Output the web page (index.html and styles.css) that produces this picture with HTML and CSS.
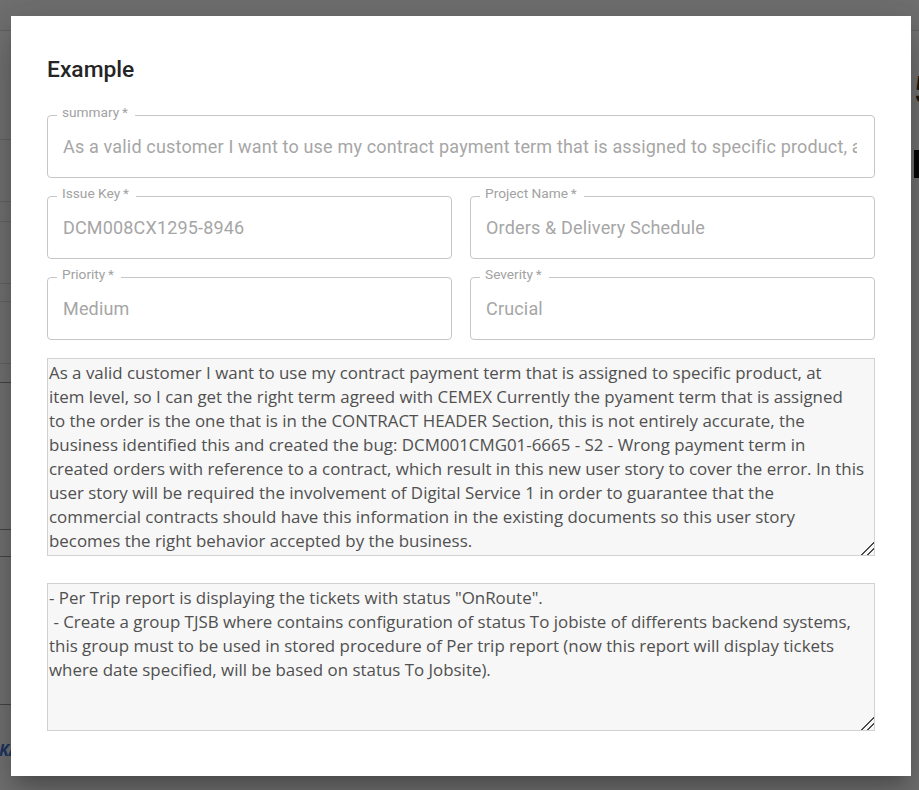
FILE: index.html
```html
<!DOCTYPE html>
<html lang="en">
<head>
<meta charset="utf-8">
<title>Example</title>
<link rel="stylesheet" href="styles.css">
</head>
<body>
<div class="page">
  <header class="page-header"></header>
  <div class="page-main">
    <div class="page-table">
      <div class="row r1"></div>
      <div class="row r2"></div>
      <div class="row r3"></div>
      <div class="row r4"></div>
      <div class="row r5"></div>
      <div class="row r6"></div>
      <div class="row r7 dark"></div>
      <div class="row r8 dark"></div>
      <div class="row r9 dark"></div>
      <div class="row r10 dark"></div>
      <div class="page-link">KANBAN</div>
    </div>
    <div class="page-side">
      <div class="side-num">5</div>
      <div class="side-title">r</div>
    </div>
  </div>
</div>
<div class="scrim"></div>
<div class="dialog-layer">
  <div class="dialog" role="dialog" aria-labelledby="dlg-title">
    <h2 class="dialog-title" id="dlg-title">Example</h2>
    <div class="fields">
      <fieldset class="field wide">
        <legend>summary&thinsp;*</legend>
        <input class="field-input" type="text" disabled value="As a valid customer I want to use my contract payment term that is assigned to specific product, at item level, so I can get the right term agreed with CEMEX">
      </fieldset>
      <fieldset class="field">
        <legend>Issue Key&thinsp;*</legend>
        <input class="field-input" type="text" disabled value="DCM008CX1295-8946">
      </fieldset>
      <fieldset class="field">
        <legend>Project Name&thinsp;*</legend>
        <input class="field-input" type="text" disabled value="Orders &amp; Delivery Schedule">
      </fieldset>
      <fieldset class="field">
        <legend>Priority&thinsp;*</legend>
        <input class="field-input" type="text" disabled value="Medium">
      </fieldset>
      <fieldset class="field">
        <legend>Severity&thinsp;*</legend>
        <input class="field-input" type="text" disabled value="Crucial">
      </fieldset>
    </div>
    <textarea class="area area-desc" readonly>As a valid customer I want to use my contract payment term that is assigned to specific product, at
item level, so I can get the right term agreed with CEMEX Currently the pyament term that is assigned
to the order is the one that is in the CONTRACT HEADER Section, this is not entirely accurate, the
business identified this and created the bug: DCM001CMG01-6665 - S2 - Wrong payment term in
created orders with reference to a contract, which result in this new user story to cover the error. In this
user story will be required the involvement of Digital Service 1 in order to guarantee that the
commercial contracts should have this information in the existing documents so this user story
becomes the right behavior accepted by the business.</textarea>
    <textarea class="area area-notes" readonly>- Per Trip report is displaying the tickets with status "OnRoute".
 - Create a group TJSB where contains configuration of status To jobiste of differents backend systems,
this group must to be used in stored procedure of Per trip report (now this report will display tickets
where date specified, will be based on status To Jobsite).</textarea>
  </div>
</div>
</body>
</html>
```

FILE: styles.css
```css
html, body {
  margin: 0;
  padding: 0;
  width: 919px;
  height: 790px;
  overflow: hidden;
  font-family: Roboto, "Liberation Sans", sans-serif;
}

/* background page (under the scrim) */
.page {
  position: fixed;
  inset: 0;
  background: #e6e6e6;
  display: flex;
  flex-direction: column;
}
.page-header {
  height: 30px;
  background: #e0e0e0;
  border-bottom: 1px solid #c6c6c6;
  flex: none;
}
.page-main {
  flex: 1;
  display: flex;
}
.page-table {
  width: 120px;
  display: flex;
  flex-direction: column;
}
.row {
  border-bottom: 1px solid #cbcbcb;
  flex: none;
}
.row.dark { border-bottom-color: #8c8c8c; }
.r1 { height: 108px; }
.r2 { height: 61px; }
.r3 { height: 19px; }
.r4 { height: 61px; }
.r5 { height: 17px; }
.r6 { height: 61px; }
.r7 { height: 18px; }
.r8 { height: 146px; }
.r9 { height: 26px; }
.r10 { height: 147px; }
.page-link {
  margin-top: 36px;
  margin-left: -1px;
  font-family: "Open Sans", sans-serif;
  font-weight: 700;
  font-style: italic;
  font-size: 16px;
  line-height: 18px;
  color: #3c6ec8;
  white-space: nowrap;
}
.page-side {
  margin-left: auto;
  width: 8px;
  overflow: visible;
  white-space: nowrap;
}
.side-num {
  margin-top: 40px;
  margin-left: 3px;
  font-size: 38px;
  line-height: 40px;
  font-weight: 700;
  color: #3a2a14;
}
.side-title {
  margin-top: 19px;
  font-size: 54px;
  line-height: 60px;
  font-weight: 700;
  color: #111;
}

.scrim {
  position: fixed;
  inset: 0;
  background: rgba(0, 0, 0, 0.5);
}

.dialog-layer {
  position: fixed;
  inset: 0;
}
.dialog {
  box-sizing: border-box;
  width: 900px;
  margin: 16px 0 0 11px;
  padding: 36px 36px 45px;
  background: #fff;
  border-radius: 0;
  box-shadow: 0 11px 15px -7px rgba(0,0,0,.2), 0 24px 38px 3px rgba(0,0,0,.14), 0 9px 46px 8px rgba(0,0,0,.12);
}
.dialog-title {
  margin: 0 0 18px;
  font-family: Roboto, sans-serif;
  font-weight: 500;
  font-size: 22.8px;
  line-height: 35px;
  color: #252525;
}

.fields {
  display: grid;
  grid-template-columns: 1fr 1fr;
  column-gap: 18px;
  row-gap: 8px;
}
.field {
  margin: 0;
  padding: 0;
  min-width: 0;
  border: 1px solid #c6c6c6;
  border-radius: 4px;
  height: 73px;
  box-sizing: border-box;
}
.field.wide { grid-column: 1 / -1; }
.field legend {
  margin-left: 9px;
  padding: 0 7px 6px 5px;
  font-family: Roboto, sans-serif;
  font-size: 13.7px;
  line-height: 14px;
  color: #a2a2a2;
}
.field-input {
  display: block;
  box-sizing: border-box;
  width: 100%;
  height: 42px;
  margin: 0;
  padding: 0 17px 0 15px;
  border: none;
  background: transparent;
  font-family: Roboto, sans-serif;
  font-size: 18px;
  letter-spacing: 0.17px;
  color: #a6a6a6;
  -webkit-text-fill-color: #a6a6a6;
  outline: none;
}

.area {
  display: block;
  box-sizing: border-box;
  width: 100%;
  margin: 18px 0 0;
  padding: 2px 0 2px 1px;
  border: 1px solid #d2d2d2;
  border-radius: 0;
  background: #f7f7f7;
  font-family: "Open Sans", "Noto Sans", sans-serif;
  font-size: 16.9px;
  line-height: 24px;
  color: #505050;
  resize: vertical;
  overflow: hidden;
  outline: none;
}
.area::-webkit-resizer {
  background:
    linear-gradient(135deg, transparent 0 56%, #4a4a4a 56% 63%, transparent 63% 76%, #4a4a4a 76% 83%, transparent 83%);
}
.area-desc { height: 198px; }
.area-notes { height: 148px; margin-top: 27px; }
```
